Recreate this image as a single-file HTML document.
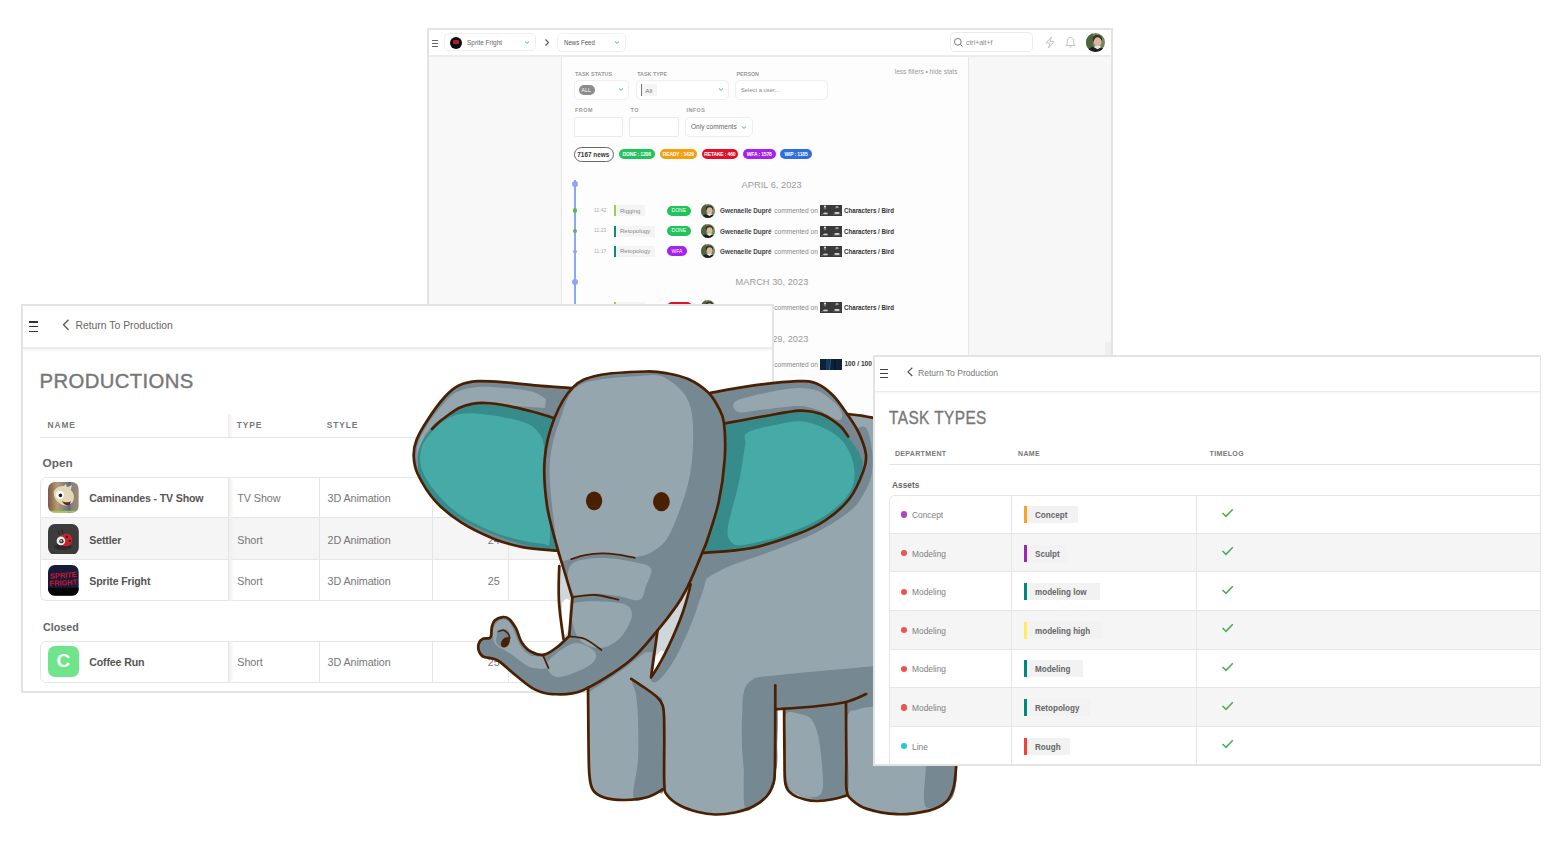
<!DOCTYPE html>
<html><head><meta charset="utf-8">
<style>
*{margin:0;padding:0;box-sizing:border-box}
html,body{width:1557px;height:850px;overflow:hidden;background:#fff;font-family:"Liberation Sans",sans-serif}
.a{position:absolute}
.t{position:absolute;white-space:nowrap;line-height:1}
#nf{left:427px;top:28px;width:686px;height:620px;border:2px solid #e3e3e3;background:#f8f8f8;overflow:hidden}
#pr{left:21px;top:304px;width:753px;height:389px;border:2px solid #e3e3e3;background:#fff;overflow:hidden}
#tt{left:873px;top:355px;width:668px;height:411px;border:2px solid #e3e3e3;border-right-width:1px;background:#fff;overflow:hidden}
</style></head><body>
<!-- NEWS FEED PANEL -->
<div id="nf" class="a"><div class="a" style="left:-429px;top:-30px;width:1557px;height:850px">
 <div class="a" style="left:429px;top:30px;width:682px;height:26px;background:#fff"></div>
 <div class="a" style="left:429px;top:55px;width:682px;height:2px;background:#ebebeb"></div>
 <div class="a" style="left:561px;top:57px;width:1px;height:400px;background:#e6e6e6"></div>
 <div class="a" style="left:562px;top:57px;width:406px;height:400px;background:#fdfdfd"></div>
 <div class="a" style="left:968px;top:57px;width:1px;height:400px;background:#e6e6e6"></div>
 <div class="a" style="left:969px;top:57px;width:142px;height:400px;background:#f7f7f7"></div>
 <div class="a" style="left:1105px;top:342px;width:6px;height:20px;background:#efefef"></div>
 <!-- header -->
 <div class="a" style="left:432px;top:40px;width:6px;height:1px;background:#666"></div>
 <div class="a" style="left:432px;top:43px;width:6px;height:1px;background:#666"></div>
 <div class="a" style="left:432px;top:46px;width:6px;height:1px;background:#666"></div>
 <div class="a" style="left:444px;top:33px;width:92px;height:18px;border:1px solid #eee;border-radius:5px"></div>
 <div class="a" style="left:450px;top:36.5px;width:12px;height:12px;border-radius:50%;background:#0a0a14;overflow:hidden"><div class="a" style="left:2.8px;top:3.6px;width:6.4px;height:3.6px;background:#b8142a;border-radius:1px"></div></div>
 <div class="t" style="left:467px;top:38.5px;font-size:7px;color:#666;transform:scaleX(0.92);transform-origin:0 0">Sprite Fright</div>
 <svg class="a" style="left:523px;top:40px" width="8" height="5"><path d="M2 1.5 L4 3.4 L6 1.5" stroke="#3cc471" stroke-width="1" fill="none"/></svg>
 <svg class="a" style="left:543px;top:38px" width="8" height="9"><path d="M2.5 1.5 L5.5 4.5 L2.5 7.5" stroke="#555" stroke-width="1.1" fill="none"/></svg>
 <div class="a" style="left:557px;top:32.7px;width:69px;height:19px;border:1px solid #eee;border-radius:5px"></div>
 <div class="t" style="left:563.6px;top:38.5px;font-size:7px;color:#555;transform:scaleX(0.87);transform-origin:0 0">News Feed</div>
 <svg class="a" style="left:613px;top:40px" width="8" height="5"><path d="M2 1.5 L4 3.4 L6 1.5" stroke="#3cc471" stroke-width="1" fill="none"/></svg>
 <div class="a" style="left:949.5px;top:32.3px;width:83px;height:20px;border:1px solid #ebebeb;border-radius:5px"></div>
 <svg class="a" style="left:953px;top:37px" width="11" height="11"><circle cx="4.8" cy="4.8" r="3.4" stroke="#777" stroke-width="1" fill="none"/><path d="M7.3 7.3 L9.5 9.5" stroke="#777" stroke-width="1"/></svg>
 <div class="t" style="left:966px;top:39.8px;font-size:6.9px;color:#888">ctrl+alt+f</div>
 <svg class="a" style="left:1044px;top:36px" width="12" height="13"><path d="M7.5 1 L2 7 L6 7 L4.5 12 L10 5.5 L6 5.5 Z" stroke="#bbb" stroke-width="0.9" fill="none" stroke-linejoin="round"/></svg>
 <svg class="a" style="left:1065px;top:36px" width="11" height="13"><path d="M5.5 1.5 C3 1.5 2.2 3.5 2.2 5.5 L2.2 8 L1 9.5 L10 9.5 L8.8 8 L8.8 5.5 C8.8 3.5 8 1.5 5.5 1.5 Z M4.5 11 L6.5 11" stroke="#bbb" stroke-width="0.9" fill="none"/></svg>
 <svg class="a" style="left:1085.5px;top:33px" width="19" height="19" viewBox="0 0 14 14"><defs><clipPath id="av"><circle cx="7" cy="7" r="7"/></clipPath></defs><g clip-path="url(#av)"><rect width="14" height="14" fill="#6d8756"/><rect x="0" y="0" width="5" height="14" fill="#4f6540"/><ellipse cx="8.3" cy="4.5" rx="3.6" ry="3" fill="#3a2e22"/><ellipse cx="8.6" cy="6.6" rx="2.9" ry="3.4" fill="#d9b8a0"/><path d="M1 14 C2 10.5 5 9.8 8 10 C11 10 13 11 14 14 Z" fill="#1f1f1f"/><path d="M5.5 10.3 L8.5 12 L11.5 10.3 L10 9.6 L7 9.6 Z" fill="#e8e8e8"/></g></svg>
 <!-- filters -->
 <div class="t" style="left:575px;top:71.6px;font-size:5.4px;font-weight:bold;color:#999;letter-spacing:0.05px">TASK STATUS</div>
 <div class="t" style="left:637.2px;top:71.6px;font-size:5.4px;font-weight:bold;color:#999;letter-spacing:0px">TASK TYPE</div>
 <div class="t" style="left:736.5px;top:72.1px;font-size:5.4px;font-weight:bold;color:#999;letter-spacing:-0.05px">PERSON</div>
 <div class="t" style="left:894.8px;top:68.7px;font-size:6.5px;color:#999">less filters • hide stats</div>
 <div class="a" style="left:574px;top:80px;width:55.2px;height:20px;border:1px solid #eee;border-radius:5px;background:#fff"></div>
 <div class="a" style="left:579px;top:85px;width:16.3px;height:10px;border-radius:5px;background:#8c8c8c"></div>
 <div class="t" style="left:581.3px;top:87.5px;font-size:5.4px;color:#fff">ALL</div>
 <svg class="a" style="left:617px;top:87px" width="8" height="5"><path d="M2 1.5 L4 3.4 L6 1.5" stroke="#3cc471" stroke-width="1" fill="none"/></svg>
 <div class="a" style="left:636.3px;top:80px;width:92.5px;height:20px;border:1px solid #eee;border-radius:5px;background:#fff"></div>
 <div class="a" style="left:640.5px;top:84.4px;width:1.4px;height:11.6px;background:#777"></div>
 <div class="a" style="left:641.9px;top:84.4px;width:15px;height:11.6px;background:#f4f4f4"></div>
 <div class="t" style="left:645.3px;top:87.6px;font-size:6.2px;color:#777">All</div>
 <svg class="a" style="left:717px;top:87px" width="8" height="5"><path d="M2 1.5 L4 3.4 L6 1.5" stroke="#3cc471" stroke-width="1" fill="none"/></svg>
 <div class="a" style="left:735.2px;top:80px;width:93px;height:20px;border:1px solid #eee;border-radius:5px;background:#fff"></div>
 <div class="t" style="left:741px;top:88px;font-size:5.8px;color:#888">Select a user...</div>
 <div class="t" style="left:575px;top:108.1px;font-size:5.4px;font-weight:bold;color:#999;letter-spacing:0.5px">FROM</div>
 <div class="t" style="left:630.5px;top:108.1px;font-size:5.4px;font-weight:bold;color:#999;letter-spacing:0.5px">TO</div>
 <div class="t" style="left:686.4px;top:108.1px;font-size:5.4px;font-weight:bold;color:#999;letter-spacing:0.5px">INFOS</div>
 <div class="a" style="left:574px;top:116.5px;width:49.4px;height:20px;border:1px solid #eaeaea;border-radius:2px;background:#fff"></div>
 <div class="a" style="left:629.2px;top:116.5px;width:49.5px;height:20px;border:1px solid #eaeaea;border-radius:2px;background:#fff"></div>
 <div class="a" style="left:685px;top:116.5px;width:67.5px;height:20px;border:1px solid #eee;border-radius:5px;background:#fff"></div>
 <div class="t" style="left:690.9px;top:123.7px;font-size:6.6px;color:#666">Only comments</div>
 <svg class="a" style="left:740px;top:124.5px" width="8" height="5"><path d="M2 1.5 L4 3.4 L6 1.5" stroke="#3cc471" stroke-width="1" fill="none"/></svg>
 <!-- stats -->
 <div class="a" style="left:573.7px;top:147px;width:40px;height:14.7px;border:1px solid #666;border-radius:7.5px;background:#fff"></div>
 <div class="t" style="left:577.3px;top:152px;font-size:6.4px;font-weight:bold;color:#333">7167 news</div>
 <div class="a" style="left:618.8px;top:149.2px;width:35.8px;height:9.7px;border-radius:5px;background:#22c35b;color:#fff;font-size:5px;font-weight:bold;line-height:10.4px;text-align:center;white-space:nowrap;letter-spacing:-0.15px">DONE : 1206</div>
 <div class="a" style="left:659.8px;top:149.2px;width:37.1px;height:9.7px;border-radius:5px;background:#f59f0f;color:#fff;font-size:5px;font-weight:bold;line-height:10.4px;text-align:center;white-space:nowrap;letter-spacing:-0.15px">READY : 1429</div>
 <div class="a" style="left:701.9px;top:149.2px;width:35.9px;height:9.7px;border-radius:5px;background:#e0102a;color:#fff;font-size:5px;font-weight:bold;line-height:10.4px;text-align:center;white-space:nowrap;letter-spacing:-0.15px">RETAKE : 460</div>
 <div class="a" style="left:742.8px;top:149.2px;width:32.9px;height:9.7px;border-radius:5px;background:#a620ee;color:#fff;font-size:5px;font-weight:bold;line-height:10.4px;text-align:center;white-space:nowrap;letter-spacing:-0.15px">WFA : 1578</div>
 <div class="a" style="left:780.4px;top:149.2px;width:31.3px;height:9.7px;border-radius:5px;background:#2f6fdc;color:#fff;font-size:5px;font-weight:bold;line-height:10.4px;text-align:center;white-space:nowrap;letter-spacing:-0.15px">WIP : 1185</div>
 <!-- timeline -->
 <div class="a" style="left:574px;top:180px;width:2px;height:200px;background:#8ea6f6"></div>
 <div class="a" style="left:572px;top:181.2px;width:6px;height:6px;border-radius:50%;background:#8ea6f6"></div>
 <div class="a" style="left:572px;top:278.7px;width:6px;height:6px;border-radius:50%;background:#8ea6f6"></div>
 <div class="t" style="left:741.6px;top:181px;font-size:9.2px;color:#999;letter-spacing:0.05px">APRIL 6, 2023</div>
 <div class="t" style="left:735.6px;top:278.3px;font-size:9.2px;color:#999;letter-spacing:0.05px">MARCH 30, 2023</div>
 <div class="t" style="left:735.6px;top:335.3px;font-size:9.2px;color:#999;letter-spacing:0.05px">MARCH 29, 2023</div>
 <div class="a" style="left:572.7px;top:208.39999999999998px;width:4.6px;height:4.6px;border-radius:50%;background:#5cb84a"></div>
 <div class="t" style="left:593.9px;top:207.89999999999998px;font-size:5.2px;color:#aaa">11:42</div>
 <div class="a" style="left:614.1px;top:205.2px;width:2px;height:11px;background:#9ccc55"></div>
 <div class="a" style="left:616.1px;top:205.2px;width:28.8px;height:11px;background:#f4f4f4"></div>
 <div class="t" style="left:620px;top:207.5px;font-size:6px;color:#888">Rigging</div>
 <div class="a" style="left:666.7px;top:205.79999999999998px;width:24.1px;height:9.8px;border-radius:5px;background:#22c35b"></div>
 <div class="t" style="left:678.75px;top:208.1px;font-size:5px;color:#fff;transform:translateX(-50%)">DONE</div>
 <svg class="a" style="left:701.4px;top:203.7px" width="14" height="14" viewBox="0 0 14 14"><defs><clipPath id="av"><circle cx="7" cy="7" r="7"/></clipPath></defs><g clip-path="url(#av)"><rect width="14" height="14" fill="#6d8756"/><rect x="0" y="0" width="5" height="14" fill="#4f6540"/><ellipse cx="8.3" cy="4.5" rx="3.6" ry="3" fill="#3a2e22"/><ellipse cx="8.6" cy="6.6" rx="2.9" ry="3.4" fill="#d9b8a0"/><path d="M1 14 C2 10.5 5 9.8 8 10 C11 10 13 11 14 14 Z" fill="#1f1f1f"/><path d="M5.5 10.3 L8.5 12 L11.5 10.3 L10 9.6 L7 9.6 Z" fill="#e8e8e8"/></g></svg>
 <div class="t" style="left:719.9px;top:208.4px;font-size:6.6px;font-weight:bold;color:#444;transform:scaleX(0.965);transform-origin:0 0">Gwenaelle Dupré</div>
 <div class="t" style="left:774.2px;top:208.4px;font-size:6.6px;color:#888">commented on</div>
 <svg class="a" style="left:820px;top:205.2px" width="22" height="11" viewBox="0 0 22 11"><rect width="22" height="11" fill="#3a3a3a"/><ellipse cx="5" cy="1.5" rx="1.2" ry="1" fill="#ddd"/><path d="M5 2.5 L5 4.5 M3.5 3 L6.5 3" stroke="#bbb" stroke-width=".5"/><ellipse cx="17" cy="2" rx="1.6" ry=".8" fill="#ccc"/><path d="M15 3 L19 2.5" stroke="#999" stroke-width=".5"/><ellipse cx="5.5" cy="8.3" rx="2.5" ry="0.9" fill="#d0d0d0"/><ellipse cx="17" cy="8" rx="2.8" ry="1.1" fill="#e0e0e0"/><path d="M1 9.5 L8 9.2 M13 9.3 L21 9" stroke="#999" stroke-width=".4"/></svg>
 <div class="t" style="left:844.4px;top:208.4px;font-size:6.6px;font-weight:bold;color:#333;transform:scaleX(0.94);transform-origin:0 0">Characters / Bird</div>
 <div class="a" style="left:572.7px;top:228.7px;width:4.6px;height:4.6px;border-radius:50%;background:#5cb84a"></div>
 <div class="t" style="left:593.9px;top:228.2px;font-size:5.2px;color:#aaa">11:23</div>
 <div class="a" style="left:614.1px;top:225.5px;width:2px;height:11px;background:#0f8a7a"></div>
 <div class="a" style="left:616.1px;top:225.5px;width:39px;height:11px;background:#f4f4f4"></div>
 <div class="t" style="left:620px;top:227.8px;font-size:6px;color:#888">Retopology</div>
 <div class="a" style="left:666.7px;top:226.1px;width:24.1px;height:9.8px;border-radius:5px;background:#22c35b"></div>
 <div class="t" style="left:678.75px;top:228.4px;font-size:5px;color:#fff;transform:translateX(-50%)">DONE</div>
 <svg class="a" style="left:701.4px;top:224.0px" width="14" height="14" viewBox="0 0 14 14"><defs><clipPath id="av"><circle cx="7" cy="7" r="7"/></clipPath></defs><g clip-path="url(#av)"><rect width="14" height="14" fill="#6d8756"/><rect x="0" y="0" width="5" height="14" fill="#4f6540"/><ellipse cx="8.3" cy="4.5" rx="3.6" ry="3" fill="#3a2e22"/><ellipse cx="8.6" cy="6.6" rx="2.9" ry="3.4" fill="#d9b8a0"/><path d="M1 14 C2 10.5 5 9.8 8 10 C11 10 13 11 14 14 Z" fill="#1f1f1f"/><path d="M5.5 10.3 L8.5 12 L11.5 10.3 L10 9.6 L7 9.6 Z" fill="#e8e8e8"/></g></svg>
 <div class="t" style="left:719.9px;top:228.7px;font-size:6.6px;font-weight:bold;color:#444;transform:scaleX(0.965);transform-origin:0 0">Gwenaelle Dupré</div>
 <div class="t" style="left:774.2px;top:228.7px;font-size:6.6px;color:#888">commented on</div>
 <svg class="a" style="left:820px;top:225.5px" width="22" height="11" viewBox="0 0 22 11"><rect width="22" height="11" fill="#3a3a3a"/><ellipse cx="5" cy="1.5" rx="1.2" ry="1" fill="#ddd"/><path d="M5 2.5 L5 4.5 M3.5 3 L6.5 3" stroke="#bbb" stroke-width=".5"/><ellipse cx="17" cy="2" rx="1.6" ry=".8" fill="#ccc"/><path d="M15 3 L19 2.5" stroke="#999" stroke-width=".5"/><ellipse cx="5.5" cy="8.3" rx="2.5" ry="0.9" fill="#d0d0d0"/><ellipse cx="17" cy="8" rx="2.8" ry="1.1" fill="#e0e0e0"/><path d="M1 9.5 L8 9.2 M13 9.3 L21 9" stroke="#999" stroke-width=".4"/></svg>
 <div class="t" style="left:844.4px;top:228.7px;font-size:6.6px;font-weight:bold;color:#333;transform:scaleX(0.94);transform-origin:0 0">Characters / Bird</div>
 <div class="a" style="left:573.2px;top:249.5px;width:3.6px;height:3.6px;border-radius:50%;background:#8ea6f6"></div>
 <div class="t" style="left:593.9px;top:248.5px;font-size:5.2px;color:#aaa">11:17</div>
 <div class="a" style="left:614.1px;top:245.8px;width:2px;height:11px;background:#0f8a7a"></div>
 <div class="a" style="left:616.1px;top:245.8px;width:39px;height:11px;background:#f4f4f4"></div>
 <div class="t" style="left:620px;top:248.10000000000002px;font-size:6px;color:#888">Retopology</div>
 <div class="a" style="left:666.7px;top:246.4px;width:20.3px;height:9.8px;border-radius:5px;background:#a620ee"></div>
 <div class="t" style="left:676.85px;top:248.70000000000002px;font-size:5px;color:#fff;transform:translateX(-50%)">WFA</div>
 <svg class="a" style="left:701.4px;top:244.3px" width="14" height="14" viewBox="0 0 14 14"><defs><clipPath id="av"><circle cx="7" cy="7" r="7"/></clipPath></defs><g clip-path="url(#av)"><rect width="14" height="14" fill="#6d8756"/><rect x="0" y="0" width="5" height="14" fill="#4f6540"/><ellipse cx="8.3" cy="4.5" rx="3.6" ry="3" fill="#3a2e22"/><ellipse cx="8.6" cy="6.6" rx="2.9" ry="3.4" fill="#d9b8a0"/><path d="M1 14 C2 10.5 5 9.8 8 10 C11 10 13 11 14 14 Z" fill="#1f1f1f"/><path d="M5.5 10.3 L8.5 12 L11.5 10.3 L10 9.6 L7 9.6 Z" fill="#e8e8e8"/></g></svg>
 <div class="t" style="left:719.9px;top:249.0px;font-size:6.6px;font-weight:bold;color:#444;transform:scaleX(0.965);transform-origin:0 0">Gwenaelle Dupré</div>
 <div class="t" style="left:774.2px;top:249.0px;font-size:6.6px;color:#888">commented on</div>
 <svg class="a" style="left:820px;top:245.8px" width="22" height="11" viewBox="0 0 22 11"><rect width="22" height="11" fill="#3a3a3a"/><ellipse cx="5" cy="1.5" rx="1.2" ry="1" fill="#ddd"/><path d="M5 2.5 L5 4.5 M3.5 3 L6.5 3" stroke="#bbb" stroke-width=".5"/><ellipse cx="17" cy="2" rx="1.6" ry=".8" fill="#ccc"/><path d="M15 3 L19 2.5" stroke="#999" stroke-width=".5"/><ellipse cx="5.5" cy="8.3" rx="2.5" ry="0.9" fill="#d0d0d0"/><ellipse cx="17" cy="8" rx="2.8" ry="1.1" fill="#e0e0e0"/><path d="M1 9.5 L8 9.2 M13 9.3 L21 9" stroke="#999" stroke-width=".4"/></svg>
 <div class="t" style="left:844.4px;top:249.0px;font-size:6.6px;font-weight:bold;color:#333;transform:scaleX(0.94);transform-origin:0 0">Characters / Bird</div>
 <div class="a" style="left:572.7px;top:304.9px;width:4.6px;height:4.6px;border-radius:50%;background:#5cb84a"></div>
 <div class="t" style="left:593.9px;top:304.4px;font-size:5.2px;color:#aaa">10:05</div>
 <div class="a" style="left:614.1px;top:301.7px;width:2px;height:11px;background:#9ccc55"></div>
 <div class="a" style="left:616.1px;top:301.7px;width:28.8px;height:11px;background:#f4f4f4"></div>
 <div class="t" style="left:620px;top:304.8px;font-size:6px;color:#888">Rigging</div>
 <div class="a" style="left:666.7px;top:302.3px;width:25px;height:9.8px;border-radius:5px;background:#e0102a"></div>
 <div class="t" style="left:679.2px;top:305.4px;font-size:5px;color:#fff;transform:translateX(-50%)">RETAKE</div>
 <svg class="a" style="left:701.4px;top:300.2px" width="14" height="14" viewBox="0 0 14 14"><defs><clipPath id="av"><circle cx="7" cy="7" r="7"/></clipPath></defs><g clip-path="url(#av)"><rect width="14" height="14" fill="#6d8756"/><rect x="0" y="0" width="5" height="14" fill="#4f6540"/><ellipse cx="8.3" cy="4.5" rx="3.6" ry="3" fill="#3a2e22"/><ellipse cx="8.6" cy="6.6" rx="2.9" ry="3.4" fill="#d9b8a0"/><path d="M1 14 C2 10.5 5 9.8 8 10 C11 10 13 11 14 14 Z" fill="#1f1f1f"/><path d="M5.5 10.3 L8.5 12 L11.5 10.3 L10 9.6 L7 9.6 Z" fill="#e8e8e8"/></g></svg>
 <div class="t" style="left:719.9px;top:304.9px;font-size:6.6px;font-weight:bold;color:#444;transform:scaleX(0.965);transform-origin:0 0">Gwenaelle Dupré</div>
 <div class="t" style="left:774.2px;top:304.9px;font-size:6.6px;color:#888">commented on</div>
 <svg class="a" style="left:820px;top:301.7px" width="22" height="11" viewBox="0 0 22 11"><rect width="22" height="11" fill="#3a3a3a"/><ellipse cx="5" cy="1.5" rx="1.2" ry="1" fill="#ddd"/><path d="M5 2.5 L5 4.5 M3.5 3 L6.5 3" stroke="#bbb" stroke-width=".5"/><ellipse cx="17" cy="2" rx="1.6" ry=".8" fill="#ccc"/><path d="M15 3 L19 2.5" stroke="#999" stroke-width=".5"/><ellipse cx="5.5" cy="8.3" rx="2.5" ry="0.9" fill="#d0d0d0"/><ellipse cx="17" cy="8" rx="2.8" ry="1.1" fill="#e0e0e0"/><path d="M1 9.5 L8 9.2 M13 9.3 L21 9" stroke="#999" stroke-width=".4"/></svg>
 <div class="t" style="left:844.4px;top:304.9px;font-size:6.6px;font-weight:bold;color:#333;transform:scaleX(0.94);transform-origin:0 0">Characters / Bird</div>
 <div class="a" style="left:572.7px;top:362.0px;width:4.6px;height:4.6px;border-radius:50%;background:#5cb84a"></div>
 <div class="t" style="left:593.9px;top:361.5px;font-size:5.2px;color:#aaa">09:12</div>
 <div class="a" style="left:614.1px;top:358.8px;width:2px;height:11px;background:#e57373"></div>
 <div class="a" style="left:616.1px;top:358.8px;width:30px;height:11px;background:#f4f4f4"></div>
 <div class="t" style="left:620px;top:361.1px;font-size:6px;color:#888">Layout</div>
 <div class="a" style="left:666.7px;top:359.40000000000003px;width:24.1px;height:9.8px;border-radius:5px;background:#22c35b"></div>
 <div class="t" style="left:678.75px;top:361.7px;font-size:5px;color:#fff;transform:translateX(-50%)">DONE</div>
 <svg class="a" style="left:701.4px;top:357.3px" width="14" height="14" viewBox="0 0 14 14"><defs><clipPath id="av"><circle cx="7" cy="7" r="7"/></clipPath></defs><g clip-path="url(#av)"><rect width="14" height="14" fill="#6d8756"/><rect x="0" y="0" width="5" height="14" fill="#4f6540"/><ellipse cx="8.3" cy="4.5" rx="3.6" ry="3" fill="#3a2e22"/><ellipse cx="8.6" cy="6.6" rx="2.9" ry="3.4" fill="#d9b8a0"/><path d="M1 14 C2 10.5 5 9.8 8 10 C11 10 13 11 14 14 Z" fill="#1f1f1f"/><path d="M5.5 10.3 L8.5 12 L11.5 10.3 L10 9.6 L7 9.6 Z" fill="#e8e8e8"/></g></svg>
 <div class="t" style="left:719.9px;top:362.0px;font-size:6.6px;font-weight:bold;color:#444;transform:scaleX(0.965);transform-origin:0 0">Gwenaelle Dupré</div>
 <div class="t" style="left:774.2px;top:362.0px;font-size:6.6px;color:#888">commented on</div>
 <svg class="a" style="left:820px;top:358.8px" width="22" height="11" viewBox="0 0 22 11"><rect width="22" height="11" fill="#0d2238"/><rect x="6" width="3" height="11" fill="#143a5e"/><path d="M10.5 0 L9.5 11" stroke="#3a78b0" stroke-width=".7"/><rect x="14" width="2" height="11" fill="#0a1a2a"/></svg>
 <div class="t" style="left:844.4px;top:360.90000000000003px;font-size:6.6px;font-weight:bold;color:#333">100 / 100</div>
</div></div>

<!-- PRODUCTIONS PANEL -->
<div id="pr" class="a"><div class="a" style="left:-23px;top:-306px;width:1557px;height:850px">
 <div class="a" style="left:23px;top:347px;width:750px;height:2px;background:#ebebeb"></div>
 <div class="a" style="left:23px;top:349px;width:750px;height:3px;background:linear-gradient(#f6f6f6,#fff)"></div>
 <div class="a" style="left:28.5px;top:321.3px;width:9.6px;height:1.6px;background:#333"></div>
 <div class="a" style="left:28.5px;top:325.8px;width:9.6px;height:1.6px;background:#333"></div>
 <div class="a" style="left:28.5px;top:330.5px;width:9.6px;height:1.6px;background:#333"></div>
 <svg class="a" style="left:60px;top:318px" width="12" height="14"><path d="M8.5 1.8 L3.5 6.8 L8.5 11.8" stroke="#555" stroke-width="1.3" fill="none"/></svg>
 <div class="t" style="left:75.4px;top:321.2px;font-size:10.4px;color:#666">Return To Production</div>
 <div class="t" style="left:39.6px;top:371px;font-size:20.3px;color:#777;letter-spacing:0.38px;-webkit-text-stroke:0.4px #777">PRODUCTIONS</div>
 <div class="t" style="left:47.6px;top:421px;font-size:8.4px;font-weight:bold;color:#777;letter-spacing:0.9px">NAME</div>
 <div class="t" style="left:236.7px;top:421px;font-size:8.4px;font-weight:bold;color:#777;letter-spacing:0.9px">TYPE</div>
 <div class="t" style="left:326.8px;top:421px;font-size:8.4px;font-weight:bold;color:#777;letter-spacing:0.9px">STYLE</div>
 <div class="t" style="left:441px;top:421px;font-size:8.4px;font-weight:bold;color:#777;letter-spacing:0.9px">EPISODES</div>
 <div class="a" style="left:227.5px;top:414px;width:5px;height:23px;background:linear-gradient(90deg,#ededed,#fff)"></div>
 <div class="a" style="left:39.6px;top:437px;width:730px;height:1px;background:#e3e3e3"></div>
 <div class="t" style="left:42.6px;top:457.5px;font-size:11.8px;font-weight:bold;color:#666">Open</div>
 <div class="t" style="left:42.6px;top:622px;font-size:11.8px;font-weight:bold;color:#666;transform:scaleX(0.91);transform-origin:0 0">Closed</div>
 <div class="a" style="left:39.6px;top:476.6px;width:740px;height:41.60000000000002px;background:#fff;border:1px solid #e6e6e6;border-top-width:1px;border-radius:6px 6px 0 0"></div>
 <svg class="a" style="left:47.9px;top:482.00000000000006px" width="30.8" height="30.8" viewBox="0 0 31 31"><defs><clipPath id="c1"><rect width="31" height="31" rx="7"/></clipPath><linearGradient id="g1" x1="0" y1="0" x2="1" y2="0"><stop offset="0" stop-color="#7a5a44"/><stop offset=".3" stop-color="#b89a78"/><stop offset=".6" stop-color="#6f7c8c"/><stop offset="1" stop-color="#a08a70"/></linearGradient></defs><g clip-path="url(#c1)"><rect width="31" height="31" fill="url(#g1)"/><rect x="20" y="0" width="3" height="31" fill="#56667a" opacity=".7"/><path d="M6 9 C9 4 15 3 20 5 L24 3 L23 8 C27 12 27 18 24 21 C20 25 14 24 11 21 C7 18 5 13 6 9 Z" fill="#e6d7b4"/><path d="M14 6 L18 2 L19 6 Z" fill="#e6d7b4"/><circle cx="12" cy="13" r="4.2" fill="#fff"/><circle cx="12.5" cy="13.5" r="1.8" fill="#222"/><path d="M14 19 C17 21 21 21 23 19 L22 23 C19 24 16 23 14 19 Z" fill="#5a2a1a"/><rect x="0" y="29" width="31" height="2" fill="#9acd4a"/></g></svg>
 <div class="t" style="left:89.3px;top:492.90px;font-size:10.6px;font-weight:bold;color:#555;letter-spacing:-0.15px">Caminandes - TV Show</div>
 <div class="a" style="left:227.9px;top:476.6px;width:1px;height:41.60000000000002px;background:#e6e6e6"></div><div class="a" style="left:229.3px;top:476.6px;width:5px;height:41.60000000000002px;background:linear-gradient(90deg,#efefef,rgba(255,255,255,0))"></div>
 <div class="t" style="left:237.3px;top:492.90px;font-size:10.8px;color:#777;letter-spacing:-0.1px">TV Show</div>
 <div class="a" style="left:318.8px;top:476.6px;width:1px;height:41.60000000000002px;background:#e6e6e6"></div>
 <div class="t" style="left:327.6px;top:492.90px;font-size:10.8px;color:#777;letter-spacing:-0.1px">3D Animation</div>
 <div class="a" style="left:432.1px;top:476.6px;width:1px;height:41.60000000000002px;background:#e6e6e6"></div>
 <div class="t" style="right:1057.4px;top:492.90px;font-size:10.8px;color:#777;letter-spacing:-0.1px">24</div>
 <div class="a" style="left:507.9px;top:476.6px;width:1px;height:41.60000000000002px;background:#e6e6e6"></div>
 <div class="a" style="left:39.6px;top:518.2px;width:740px;height:41.69999999999993px;background:#f5f5f5;border:1px solid #e6e6e6;border-top-width:0px;border-radius:0"></div>
 <svg class="a" style="left:47.9px;top:523.65px" width="30.8" height="30.8" viewBox="0 0 31 31"><rect width="31" height="31" rx="7" fill="#3c3c3c"/><ellipse cx="15" cy="23" rx="9" ry="3" fill="#2a2a2a"/><path d="M10 7 L12 11 M14 6 L15 10" stroke="#222" stroke-width="1"/><circle cx="18" cy="16" r="6.5" fill="#c8232c"/><circle cx="19" cy="13" r="1.2" fill="#222"/><circle cx="22" cy="17" r="1.1" fill="#222"/><circle cx="13" cy="17" r="4.3" fill="#eee"/><circle cx="13.5" cy="17.3" r="2.2" fill="#333"/><circle cx="13.2" cy="17" r="0.9" fill="#ddd"/></svg>
 <div class="t" style="left:89.3px;top:534.55px;font-size:10.6px;font-weight:bold;color:#555;letter-spacing:-0.15px">Settler</div>
 <div class="a" style="left:227.9px;top:518.2px;width:1px;height:41.69999999999993px;background:#e6e6e6"></div><div class="a" style="left:229.3px;top:518.2px;width:5px;height:41.69999999999993px;background:linear-gradient(90deg,#efefef,rgba(255,255,255,0))"></div>
 <div class="t" style="left:237.3px;top:534.55px;font-size:10.8px;color:#777;letter-spacing:-0.1px">Short</div>
 <div class="a" style="left:318.8px;top:518.2px;width:1px;height:41.69999999999993px;background:#e6e6e6"></div>
 <div class="t" style="left:327.6px;top:534.55px;font-size:10.8px;color:#777;letter-spacing:-0.1px">2D Animation</div>
 <div class="a" style="left:432.1px;top:518.2px;width:1px;height:41.69999999999993px;background:#e6e6e6"></div>
 <div class="t" style="right:1057.4px;top:534.55px;font-size:10.8px;color:#777;letter-spacing:-0.1px">24</div>
 <div class="a" style="left:507.9px;top:518.2px;width:1px;height:41.69999999999993px;background:#e6e6e6"></div>
 <div class="a" style="left:39.6px;top:559.9px;width:740px;height:41.60000000000002px;background:#fff;border:1px solid #e6e6e6;border-top-width:0px;border-radius:0 0 6px 6px"></div>
 <svg class="a" style="left:47.9px;top:565.3000000000001px" width="30.8" height="30.8" viewBox="0 0 31 31"><defs><clipPath id="c3"><rect width="31" height="31" rx="7"/></clipPath></defs><g clip-path="url(#c3)"><rect width="31" height="31" fill="#141c38"/><rect y="23" width="31" height="8" fill="#050505"/><text x="15.5" y="13" text-anchor="middle" font-family="Liberation Sans" font-weight="bold" font-size="7.5" fill="#d0142a" transform="rotate(-4 15.5 13)">SPRITE</text><text x="15.5" y="20.5" text-anchor="middle" font-family="Liberation Sans" font-weight="bold" font-size="7.5" fill="#d0142a" transform="rotate(-3 15.5 20)">FRIGHT</text></g></svg>
 <div class="t" style="left:89.3px;top:576.20px;font-size:10.6px;font-weight:bold;color:#555;letter-spacing:-0.15px">Sprite Fright</div>
 <div class="a" style="left:227.9px;top:559.9px;width:1px;height:41.60000000000002px;background:#e6e6e6"></div><div class="a" style="left:229.3px;top:559.9px;width:5px;height:41.60000000000002px;background:linear-gradient(90deg,#efefef,rgba(255,255,255,0))"></div>
 <div class="t" style="left:237.3px;top:576.20px;font-size:10.8px;color:#777;letter-spacing:-0.1px">Short</div>
 <div class="a" style="left:318.8px;top:559.9px;width:1px;height:41.60000000000002px;background:#e6e6e6"></div>
 <div class="t" style="left:327.6px;top:576.20px;font-size:10.8px;color:#777;letter-spacing:-0.1px">3D Animation</div>
 <div class="a" style="left:432.1px;top:559.9px;width:1px;height:41.60000000000002px;background:#e6e6e6"></div>
 <div class="t" style="right:1057.4px;top:576.20px;font-size:10.8px;color:#777;letter-spacing:-0.1px">25</div>
 <div class="a" style="left:507.9px;top:559.9px;width:1px;height:41.60000000000002px;background:#e6e6e6"></div>
 <div class="a" style="left:39.6px;top:641.0px;width:740px;height:41.60000000000002px;background:#fff;border:1px solid #e6e6e6;border-top-width:1px;border-radius:6px"></div>
 <div class="a" style="left:47.9px;top:646.4px;width:30.8px;height:30.8px;border-radius:7px;background:#6ee58a;color:#fff;font-size:19px;font-weight:bold;line-height:30.8px;text-align:center">C</div>
 <div class="t" style="left:89.3px;top:657.30px;font-size:10.6px;font-weight:bold;color:#555;letter-spacing:-0.15px">Coffee Run</div>
 <div class="a" style="left:227.9px;top:641.0px;width:1px;height:41.60000000000002px;background:#e6e6e6"></div><div class="a" style="left:229.3px;top:641.0px;width:5px;height:41.60000000000002px;background:linear-gradient(90deg,#efefef,rgba(255,255,255,0))"></div>
 <div class="t" style="left:237.3px;top:657.30px;font-size:10.8px;color:#777;letter-spacing:-0.1px">Short</div>
 <div class="a" style="left:318.8px;top:641.0px;width:1px;height:41.60000000000002px;background:#e6e6e6"></div>
 <div class="t" style="left:327.6px;top:657.30px;font-size:10.8px;color:#777;letter-spacing:-0.1px">3D Animation</div>
 <div class="a" style="left:432.1px;top:641.0px;width:1px;height:41.60000000000002px;background:#e6e6e6"></div>
 <div class="t" style="right:1057.4px;top:657.30px;font-size:10.8px;color:#777;letter-spacing:-0.1px">25</div>
 <div class="a" style="left:507.9px;top:641.0px;width:1px;height:41.60000000000002px;background:#e6e6e6"></div>
 <div class="a" style="left:23px;top:691px;width:750px;height:2px;background:#e3e3e3"></div>
</div></div>

<!-- ELEPHANT -->
<svg class="a" style="left:0;top:0" width="1557" height="850" viewBox="0 0 1557 850">
<path d="M700.0 450.0 C718.3 426.3 735.2 424.0 760.0 418.0 C784.8 412.0 830.2 414.0 849.0 414.0 C867.8 414.0 861.2 413.7 873.0 418.0 C884.8 422.3 906.3 426.3 920.0 440.0 C933.7 453.7 948.7 473.3 955.0 500.0 C961.3 526.7 957.7 555.7 958.0 600.0 C958.3 644.3 957.6 735.6 957.0 766.0 C956.4 796.4 955.7 776.7 954.5 782.4 C953.3 788.1 954.2 795.3 950.0 800.0 C945.8 804.7 937.8 808.2 929.0 810.6 C920.2 813.0 907.3 814.5 897.0 814.2 C886.7 813.9 875.1 811.9 867.0 808.9 C858.9 805.9 852.0 798.7 848.5 796.5 C845.0 794.3 851.1 794.9 846.0 795.6 C840.9 796.4 826.5 801.4 817.7 801.0 C808.9 800.6 798.5 795.8 793.0 793.0 C787.5 790.2 786.4 792.8 785.0 784.0 C783.6 775.2 784.6 752.3 784.5 740.0 C784.4 727.7 785.5 715.2 784.1 710.0 C782.7 704.8 777.4 699.3 776.0 709.0 C774.6 718.7 776.4 755.7 776.0 768.0 C775.6 780.3 775.0 778.3 773.5 783.0 C772.0 787.7 770.2 792.2 767.0 796.0 C763.8 799.8 759.3 803.2 754.0 806.0 C748.7 808.8 741.5 811.1 735.0 812.5 C728.5 813.9 721.2 814.6 715.0 814.5 C708.8 814.4 703.8 813.5 698.0 812.0 C692.2 810.5 685.2 808.3 680.0 805.5 C674.8 802.7 669.9 797.7 667.0 795.0 C664.1 792.3 666.1 789.0 662.9 789.3 C659.7 789.6 654.4 795.2 648.0 797.0 C641.6 798.8 632.1 799.9 624.8 800.0 C617.5 800.1 609.3 799.2 604.0 797.5 C598.7 795.8 595.4 793.8 593.0 790.0 C590.6 786.2 590.1 783.3 589.4 775.0 C588.6 766.7 588.7 754.6 588.5 740.0 C588.3 725.4 586.1 704.3 588.0 687.6 C589.9 670.9 589.7 661.3 600.0 640.0 C610.3 618.7 633.3 591.7 650.0 560.0 C666.7 528.3 681.7 473.7 700.0 450.0 Z" fill="#95a6ae"/>
<path d="M746.0 700.0 C747.7 693.3 746.3 684.2 752.0 680.0 C757.7 675.8 761.2 677.2 780.0 675.0 C798.8 672.8 845.0 668.7 865.0 667.0 C885.0 665.3 889.2 659.5 900.0 665.0 C910.8 670.5 921.7 684.2 930.0 700.0 C938.3 715.8 945.8 746.3 950.0 760.0 C954.2 773.7 959.2 780.3 955.0 782.0 C950.8 783.7 934.2 777.0 925.0 770.0 C915.8 763.0 909.2 748.3 900.0 740.0 C890.8 731.7 878.7 724.2 870.0 720.0 C861.3 715.8 851.7 703.3 848.0 715.0 C844.3 726.7 851.0 782.5 848.0 790.0 C845.0 797.5 835.0 771.7 830.0 760.0 C825.0 748.3 824.7 728.0 818.0 720.0 C811.3 712.0 797.0 713.3 790.0 712.0 C783.0 710.7 778.3 702.3 776.0 712.0 C773.7 721.7 780.3 757.0 776.0 770.0 C771.7 783.0 755.5 791.7 750.0 790.0 C744.5 788.3 744.3 771.7 743.0 760.0 C741.7 748.3 741.5 730.0 742.0 720.0 C742.5 710.0 744.3 706.7 746.0 700.0 Z" fill="#768891"/>
<path d="M784 711 L846 703 L847 796 L830 801 L815 799 L800 795 L786 786 Z" fill="#768891"/>
<path d="M786.0 714.0 C788.3 709.7 795.8 713.2 800.0 714.0 C804.2 714.8 808.0 715.5 811.0 719.0 C814.0 722.5 816.2 727.3 818.0 735.0 C819.8 742.7 821.3 755.5 822.0 765.0 C822.7 774.5 824.0 786.7 822.0 792.0 C820.0 797.3 814.5 797.0 810.0 797.0 C805.5 797.0 798.8 794.8 795.0 792.0 C791.2 789.2 788.5 788.7 787.0 780.0 C785.5 771.3 786.2 751.0 786.0 740.0 C785.8 729.0 783.7 718.3 786.0 714.0 Z" fill="#95a6ae"/>
<path d="M852.0 712.0 C860.3 706.2 887.8 705.3 900.0 705.0 C912.2 704.7 920.3 700.8 925.0 710.0 C929.7 719.2 928.0 745.0 928.0 760.0 C928.0 775.0 929.7 792.3 925.0 800.0 C920.3 807.7 909.2 806.0 900.0 806.0 C890.8 806.0 878.0 803.5 870.0 800.0 C862.0 796.5 855.3 795.0 852.0 785.0 C848.7 775.0 850.0 752.2 850.0 740.0 C850.0 727.8 843.7 717.8 852.0 712.0 Z" fill="#95a6ae"/>
<path d="M925.0 700.0 C930.7 690.0 954.7 689.0 960.0 700.0 C965.3 711.0 957.8 751.0 957.0 766.0 C956.2 781.0 956.5 784.0 955.0 790.0 C953.5 796.0 952.2 799.0 948.0 802.0 C943.8 805.0 934.0 808.3 930.0 808.0 C926.0 807.7 924.7 808.0 924.0 800.0 C923.3 792.0 925.8 776.7 926.0 760.0 C926.2 743.3 919.3 710.0 925.0 700.0 Z" fill="#768891"/>
<path d="M632.0 680.0 C633.5 678.8 640.8 685.2 645.0 688.0 C649.2 690.8 654.0 694.0 657.0 697.0 C660.0 700.0 661.8 691.3 663.0 706.0 C664.2 720.7 665.2 770.5 664.0 785.0 C662.8 799.5 661.0 790.7 656.0 793.0 C651.0 795.3 637.0 804.5 634.0 799.0 C631.0 793.5 637.3 773.2 638.0 760.0 C638.7 746.8 638.3 730.8 638.0 720.0 C637.7 709.2 637.0 701.7 636.0 695.0 C635.0 688.3 630.5 681.2 632.0 680.0 Z" fill="#768891"/>
<path d="M745.0 688.0 C750.2 675.7 769.8 672.3 775.0 686.0 C780.2 699.7 776.8 752.3 776.0 770.0 C775.2 787.7 773.2 786.3 770.0 792.0 C766.8 797.7 761.2 801.3 757.0 804.0 C752.8 806.7 747.2 815.3 745.0 808.0 C742.8 800.7 744.0 780.0 744.0 760.0 C744.0 740.0 739.8 700.3 745.0 688.0 Z" fill="#768891"/>
<path d="M712 548 C710 562 708 570 706.6 577.6 C703 592 700 600 699 602 C694 618 688 632 682 645 C676 658 668 672 658 681 C654 684 650 682 650 676 L652 652 L645 652.5 C638 658 632 662 628.9 665 C620 672 610 678 600 685 L589 692 L586 689 L620 667 L657.6 630.4 L690 585 L703 551 Z" fill="#768891"/>
<path d="M700.0 546.0 C708.4 545.3 734.3 545.0 750.6 542.0 C766.9 539.0 785.7 532.5 797.6 528.0 C809.5 523.5 814.1 520.7 822.0 515.0 C829.9 509.3 839.0 501.5 845.0 494.0 C851.0 486.5 855.5 476.7 858.0 470.0 C860.5 463.3 860.5 460.3 860.0 454.0 C859.5 447.7 854.0 436.3 855.0 432.0 C856.0 427.7 863.2 425.0 866.0 428.0 C868.8 431.0 871.1 442.2 872.0 450.0 C872.9 457.8 873.0 467.5 871.5 475.0 C870.0 482.5 866.6 489.0 863.0 495.0 C859.4 501.0 857.7 504.8 850.0 511.0 C842.3 517.2 829.5 525.5 817.0 532.0 C804.5 538.5 788.8 544.5 774.7 550.0 C760.6 555.5 742.9 560.8 732.4 565.0 C721.9 569.2 715.4 573.3 712.0 575.0 L704.0 580.0 L696.0 560.0 Z" fill="#768891"/>
<path d="M710.6 392.9 C717.3 391.7 736.1 387.8 750.6 385.9 C765.1 383.9 786.6 381.6 797.6 381.2 C808.6 380.8 810.6 381.1 816.5 383.5 C822.4 385.9 827.8 390.2 832.9 395.3 C838.0 400.4 842.8 407.8 847.1 414.1 C851.4 420.4 855.7 426.2 858.8 432.9 C861.9 439.6 865.1 447.8 865.9 454.1 C866.7 460.4 866.2 463.2 863.5 470.6 C860.8 478.1 855.7 490.6 849.4 498.8 C843.1 507.0 834.5 514.1 825.9 520.0 C817.3 525.9 810.1 529.4 797.6 534.1 C785.1 538.8 766.3 545.1 750.6 548.2 C734.9 551.3 711.4 552.1 703.5 552.9 L700.0 540.0 L712.0 470.0 L712.0 400.0 Z" fill="#768891"/>
<path d="M736.0 401.0 C741.3 397.7 759.7 394.2 770.0 392.0 C780.3 389.8 789.6 388.2 797.6 388.0 C805.6 387.8 811.8 388.5 818.0 391.0 C824.2 393.5 831.0 399.2 835.0 403.0 C839.0 406.8 841.5 411.2 842.0 414.0 C842.5 416.8 842.0 420.7 838.0 420.0 C834.0 419.3 824.7 412.3 818.0 410.0 C811.3 407.7 807.3 406.0 797.6 406.0 C787.9 406.0 769.9 409.0 760.0 410.0 C750.1 411.0 742.0 413.5 738.0 412.0 C734.0 410.5 730.7 404.3 736.0 401.0 Z" fill="#95a6ae"/>
<path d="M724.7 423.5 C731.0 422.3 749.9 418.6 762.4 416.5 C774.9 414.4 790.2 411.0 800.0 410.6 C809.8 410.2 814.5 411.6 821.2 414.1 C827.9 416.7 835.5 422.2 840.0 425.9 C844.5 429.6 844.9 431.6 848.2 436.5 C851.5 441.4 857.7 449.4 860.0 455.0 C862.3 460.6 863.8 462.7 862.0 470.0 C860.2 477.3 855.4 490.5 849.4 498.8 C843.4 507.1 834.5 514.1 825.9 520.0 C817.3 525.9 810.1 529.4 797.6 534.1 C785.1 538.8 766.3 545.1 750.6 548.2 C734.9 551.3 711.4 552.1 703.5 552.9 L700.0 540.0 L712.0 470.0 L715.0 424.0 Z" fill="#378c8b"/>
<path d="M747.2 432.7 C752.2 429.3 765.1 426.8 775.0 425.0 C784.9 423.2 796.0 420.0 806.5 422.0 C817.0 424.0 830.5 430.3 838.3 437.0 C846.1 443.7 851.0 453.6 853.1 462.4 C855.2 471.2 855.6 481.2 851.0 490.0 C846.4 498.8 836.6 507.9 825.6 515.3 C814.6 522.7 799.1 529.4 785.3 534.4 C771.5 539.4 752.2 544.0 743.0 545.0 C733.8 546.0 732.7 543.9 730.2 540.7 C727.7 537.5 726.7 535.4 728.1 525.9 C729.5 516.4 735.9 497.0 738.7 483.6 C741.5 470.2 743.6 453.9 745.0 445.4 C746.4 436.9 742.2 436.1 747.2 432.7 Z" fill="#46aaa7"/>
<path d="M710.6 392.9 C717.3 391.7 736.1 387.8 750.6 385.9 C765.1 383.9 786.6 381.6 797.6 381.2 C808.6 380.8 810.6 381.1 816.5 383.5 C822.4 385.9 827.8 390.2 832.9 395.3 C838.0 400.4 842.8 407.8 847.1 414.1 C851.4 420.4 855.7 426.2 858.8 432.9 C861.9 439.6 865.1 447.8 865.9 454.1 C866.7 460.4 866.2 463.2 863.5 470.6 C860.8 478.1 855.7 490.6 849.4 498.8 C843.1 507.0 834.5 514.1 825.9 520.0 C817.3 525.9 810.1 529.4 797.6 534.1 C785.1 538.8 766.3 545.1 750.6 548.2 C734.9 551.3 711.4 552.1 703.5 552.9" fill="none" stroke="#4a1f02" stroke-width="2.7" stroke-linecap="round" stroke-linejoin="round"/>
<path d="M724.7 423.5 C731.0 422.3 749.9 418.6 762.4 416.5 C774.9 414.4 790.2 411.0 800.0 410.6 C809.8 410.2 814.5 411.6 821.2 414.1 C827.9 416.7 835.5 422.2 840.0 425.9 C844.5 429.6 846.8 434.7 848.2 436.5" fill="none" stroke="#4a1f02" stroke-width="2.7" stroke-linecap="round" stroke-linejoin="round"/>
<path d="M847.0 414.0 C849.2 414.2 855.3 414.8 860.0 415.5 C864.7 416.2 872.5 417.6 875.0 418.0" fill="none" stroke="#4a1f02" stroke-width="2.7" stroke-linecap="round" stroke-linejoin="round"/>
<path d="M573.0 388.2 C567.7 387.8 552.4 386.9 541.2 385.9 C530.0 384.9 516.5 383.2 505.9 382.4 C495.3 381.6 485.5 380.7 477.7 381.2 C469.9 381.7 464.4 382.9 458.9 385.5 C453.4 388.1 449.8 391.4 444.7 397.0 C439.6 402.6 432.9 411.8 428.2 419.0 C423.5 426.2 418.9 433.8 416.5 440.0 C414.1 446.2 413.5 450.3 413.7 456.0 C413.9 461.7 414.1 466.5 417.7 474.0 C421.3 481.5 428.1 493.1 435.3 501.2 C442.6 509.3 451.4 516.1 461.2 522.4 C471.0 528.7 484.0 534.8 494.2 538.9 C504.4 543.0 512.0 545.1 522.4 547.1 C532.8 549.1 550.8 550.1 556.5 550.7 L562.0 545.0 L560.0 470.0 L575.0 400.0 Z" fill="#768891"/>
<path d="M546.0 399.0 C543.6 397.8 538.6 393.3 531.8 391.5 C525.0 389.7 514.1 388.8 505.0 388.0 C495.9 387.2 484.8 386.4 477.0 387.0 C469.2 387.6 463.2 389.2 458.0 391.5 C452.8 393.8 450.7 396.1 446.0 401.0 C441.3 405.9 434.5 414.3 430.0 421.0 C425.5 427.7 421.2 435.2 419.0 441.0 C416.8 446.8 416.5 450.8 416.5 456.0 C416.5 461.2 417.2 467.0 419.0 472.0 C420.8 477.0 425.7 483.7 427.0 486.0 L418.0 466.0 L419.0 450.0 L425.0 435.0 L434.0 424.0 L452.0 412.0 L470.0 406.0 L500.0 405.0 L530.0 407.0 L545.0 408.0 Z" fill="#95a6ae"/>
<path d="M553.0 417.7 C545.1 415.7 518.6 408.3 505.9 405.9 C493.2 403.5 484.4 403.0 477.0 403.3 C469.6 403.6 466.1 405.5 461.5 407.6 C456.9 409.7 454.9 412.0 449.7 415.9 C444.4 419.8 434.9 426.0 430.0 431.0 C425.1 436.0 422.1 440.8 420.0 446.0 C417.9 451.2 417.0 455.7 417.5 462.0 C418.0 468.3 417.6 475.5 423.0 484.0 C428.4 492.5 438.8 504.8 450.0 513.0 C461.2 521.2 477.5 527.7 490.0 533.0 C502.5 538.3 513.9 542.0 525.0 545.0 C536.1 548.0 551.2 549.8 556.5 550.7 L562.0 545.0 L560.0 470.0 L560.0 420.0 Z" fill="#378c8b"/>
<path d="M449.7 417.5 C457.4 414.1 464.3 412.9 476.0 413.5 C487.7 414.1 509.7 417.9 520.0 421.0 C530.3 424.1 533.8 426.5 538.0 432.0 C542.2 437.5 543.0 436.7 545.0 454.0 C547.0 471.3 550.7 521.1 550.0 536.0 C549.3 550.9 549.3 543.8 541.0 543.5 C532.7 543.2 513.3 539.2 500.0 534.5 C486.7 529.8 471.7 522.5 461.0 515.5 C450.3 508.5 442.5 500.1 436.0 492.5 C429.5 484.9 424.5 477.1 422.0 470.0 C419.5 462.9 419.7 456.0 421.0 450.0 C422.3 444.0 425.2 439.4 430.0 434.0 C434.8 428.6 442.0 420.9 449.7 417.5 Z" fill="#46aaa7"/>
<path d="M573.0 388.2 C567.7 387.8 552.4 386.9 541.2 385.9 C530.0 384.9 516.5 383.2 505.9 382.4 C495.3 381.6 485.5 380.7 477.7 381.2 C469.9 381.7 464.4 382.9 458.9 385.5 C453.4 388.1 449.8 391.4 444.7 397.0 C439.6 402.6 432.9 411.8 428.2 419.0 C423.5 426.2 418.9 433.8 416.5 440.0 C414.1 446.2 413.5 450.3 413.7 456.0 C413.9 461.7 414.1 466.5 417.7 474.0 C421.3 481.5 428.1 493.1 435.3 501.2 C442.6 509.3 451.4 516.1 461.2 522.4 C471.0 528.7 484.0 534.8 494.2 538.9 C504.4 543.0 512.0 545.1 522.4 547.1 C532.8 549.1 550.8 550.1 556.5 550.7" fill="none" stroke="#4a1f02" stroke-width="2.7" stroke-linecap="round" stroke-linejoin="round"/>
<path d="M553.0 417.7 C549.2 416.6 537.9 413.0 530.0 411.0 C522.1 409.0 513.2 406.8 505.9 405.5 C498.6 404.2 491.6 403.3 486.0 403.0 C480.4 402.7 476.5 403.0 472.0 403.8 C467.5 404.6 463.2 406.0 459.0 408.0 C454.8 410.0 450.5 413.5 447.0 416.0 C443.5 418.5 440.5 420.8 438.0 423.0 C435.5 425.2 433.0 428.0 432.0 429.0" fill="none" stroke="#4a1f02" stroke-width="2.7" stroke-linecap="round" stroke-linejoin="round"/>
<path d="M558.8 553.2 C556.8 545.4 549.5 521.9 547.1 506.2 C544.8 490.5 543.5 473.6 544.7 459.1 C545.9 444.6 549.4 431.1 554.1 419.1 C558.8 407.2 565.5 394.7 572.9 387.4 C580.3 380.1 586.6 377.8 598.8 375.2 C611.0 372.6 634.4 371.8 645.9 371.5 C657.4 371.2 661.0 372.2 668.0 373.5 C675.0 374.8 681.5 376.0 688.2 379.1 C694.9 382.2 703.0 387.6 708.0 392.3 C713.0 397.0 715.7 402.2 718.4 407.4 C721.1 412.6 723.0 414.8 724.0 423.4 C725.0 432.0 725.6 446.1 724.7 459.1 C723.8 472.1 721.7 488.0 718.8 501.5 C715.9 515.0 710.0 531.7 707.3 540.0 C704.6 548.3 705.1 545.6 702.8 551.3 C700.5 556.9 696.2 567.4 693.4 573.9 C690.6 580.4 688.8 584.7 686.0 590.0 C683.2 595.3 681.2 599.2 676.5 605.9 C671.8 612.6 665.5 621.1 657.6 630.4 C649.7 639.7 641.4 651.5 628.9 661.5 C616.4 671.5 595.1 685.1 582.4 690.5 C569.6 695.9 560.3 694.3 552.4 694.1 C544.5 693.9 540.6 692.3 534.7 689.4 C528.8 686.5 522.8 681.0 517.1 676.5 C511.4 672.0 504.5 665.4 500.6 662.4 C496.7 659.4 496.4 659.8 493.5 658.8 C490.6 657.8 485.3 657.9 482.9 656.5 C480.4 655.1 479.5 652.8 478.8 650.6 C478.1 648.4 478.1 645.5 478.8 643.5 C479.5 641.5 481.1 639.7 482.9 638.8 C484.7 637.9 488.0 638.8 489.4 638.2 C490.8 637.6 490.8 637.1 491.2 635.3 C491.6 633.4 491.2 629.5 491.8 627.1 C492.4 624.7 492.9 622.3 494.7 620.6 C496.5 618.9 500.0 617.4 502.4 617.1 C504.8 616.8 506.6 616.9 508.8 618.8 C511.1 620.6 513.7 624.3 515.9 628.2 C518.1 632.1 519.2 638.5 521.8 642.4 C524.3 646.3 527.5 649.8 531.2 651.8 C534.9 653.8 539.8 655.5 544.1 654.7 C548.4 653.9 552.9 650.2 557.1 647.1 C561.3 644.0 567.2 637.9 569.2 636.0 L572.4 597.9 L558.8 553.2 Z" fill="#768891"/>
<path d="M560.0 420.0 C565.0 407.5 566.7 392.3 580.0 385.0 C593.3 377.7 625.5 377.0 640.0 376.0 C654.5 375.0 658.6 373.8 667.0 379.0 C675.4 384.2 686.7 392.1 690.6 407.4 C694.5 422.7 693.7 450.5 690.6 470.9 C687.5 491.3 677.7 516.5 671.8 529.7 C665.9 542.9 661.3 545.5 655.0 550.0 C648.7 554.5 643.0 556.5 634.0 557.0 C625.0 557.5 611.5 552.7 601.0 553.0 C590.5 553.3 577.8 558.5 571.0 559.0 C564.2 559.5 563.2 565.0 560.0 556.0 C556.8 547.0 553.7 521.0 552.0 505.0 C550.3 489.0 548.7 474.2 550.0 460.0 C551.3 445.8 555.0 432.5 560.0 420.0 Z" fill="#95a6ae"/>
<path d="M573.0 563.0 C578.5 559.3 590.8 558.2 601.0 558.0 C611.2 557.8 625.7 560.2 634.0 562.0 C642.3 563.8 649.0 564.5 651.0 568.5 C653.0 572.5 647.9 580.8 646.0 586.0 C644.1 591.2 644.1 598.3 639.4 600.0 C634.7 601.7 625.6 597.1 618.0 596.0 C610.4 594.9 601.3 593.7 594.0 593.5 C586.7 593.3 578.3 597.2 574.0 595.0 C569.7 592.8 568.2 585.3 568.0 580.0 C567.8 574.7 567.5 566.7 573.0 563.0 Z" fill="#95a6ae"/>
<path d="M574.0 603.0 C582.0 600.2 610.3 601.0 620.0 603.0 C629.7 605.0 632.0 609.2 632.0 615.0 C632.0 620.8 625.3 632.5 620.0 638.0 C614.7 643.5 606.7 647.7 600.0 648.0 C593.3 648.3 584.7 644.7 580.0 640.0 C575.3 635.3 573.0 626.2 572.0 620.0 C571.0 613.8 566.0 605.8 574.0 603.0 Z" fill="#95a6ae"/>
<path d="M551.0 658.0 C555.5 653.5 567.7 644.0 575.0 643.0 C582.3 642.0 592.5 648.3 595.0 652.0 C597.5 655.7 595.8 660.8 590.0 665.0 C584.2 669.2 567.0 676.2 560.0 677.0 C553.0 677.8 549.5 673.2 548.0 670.0 C546.5 666.8 546.5 662.5 551.0 658.0 Z" fill="#95a6ae"/>
<path d="M494.0 627.0 C495.2 624.3 497.7 621.0 500.0 620.0 C502.3 619.0 505.7 619.2 508.0 621.0 C510.3 622.8 512.0 627.0 514.0 631.0 C516.0 635.0 517.3 641.0 520.0 645.0 C522.7 649.0 525.8 652.8 530.0 655.0 C534.2 657.2 542.0 655.8 545.0 658.0 C548.0 660.2 550.5 666.5 548.0 668.0 C545.5 669.5 535.5 668.8 530.0 667.0 C524.5 665.2 519.0 659.7 515.0 657.0 C511.0 654.3 509.2 653.0 506.0 651.0 C502.8 649.0 498.2 647.5 496.0 645.0 C493.8 642.5 493.3 639.0 493.0 636.0 C492.7 633.0 492.8 629.7 494.0 627.0 Z" fill="#95a6ae"/>
<path d="M497 633 C499 628 506 627 509 632 C511 636 511 643 508 646 C504 649 497 647 496 641 Z" fill="#768891"/>
<path d="M559.4 563 L558.8 592 L560.6 618 L563.5 639 L569.2 636 L572.4 597.9 Z" fill="#cfd7dc"/>
<path d="M562 603 L566 598.5 L569.8 600 L568.5 630 L565 636 L562.3 628 Z" fill="#fff"/>
<path d="M691 583 L683 597 L676.5 605.9 L667 618 L657.6 630.4 L651 677.4 C660 665 672 640 680 620 C685 605 688 595 691 583 Z" fill="#cfd7dc"/>
<path d="M652.5 674 L655.5 656 L661 650.5 L666 652.5 C663 661 659 668 652.5 674 Z" fill="#fff"/>
<path d="M558.8 553.2 C556.8 545.4 549.5 521.9 547.1 506.2 C544.8 490.5 543.5 473.6 544.7 459.1 C545.9 444.6 549.4 431.1 554.1 419.1 C558.8 407.2 565.5 394.7 572.9 387.4 C580.3 380.1 586.6 377.8 598.8 375.2 C611.0 372.6 634.4 371.8 645.9 371.5 C657.4 371.2 661.0 372.2 668.0 373.5 C675.0 374.8 681.5 376.0 688.2 379.1 C694.9 382.2 703.0 387.6 708.0 392.3 C713.0 397.0 715.7 402.2 718.4 407.4 C721.1 412.6 723.0 414.8 724.0 423.4 C725.0 432.0 725.6 446.1 724.7 459.1 C723.8 472.1 721.7 488.0 718.8 501.5 C715.9 515.0 710.0 531.7 707.3 540.0 C704.6 548.3 705.1 545.6 702.8 551.3 C700.5 556.9 696.2 567.4 693.4 573.9 C690.6 580.4 688.8 584.7 686.0 590.0 C683.2 595.3 681.2 599.2 676.5 605.9 C671.8 612.6 665.5 621.1 657.6 630.4 C649.7 639.7 641.4 651.5 628.9 661.5 C616.4 671.5 595.1 685.1 582.4 690.5 C569.6 695.9 560.3 694.3 552.4 694.1 C544.5 693.9 540.6 692.3 534.7 689.4 C528.8 686.5 522.8 681.0 517.1 676.5 C511.4 672.0 504.5 665.4 500.6 662.4 C496.7 659.4 496.4 659.8 493.5 658.8 C490.6 657.8 485.3 657.9 482.9 656.5 C480.4 655.1 479.5 652.8 478.8 650.6 C478.1 648.4 478.1 645.5 478.8 643.5 C479.5 641.5 481.1 639.7 482.9 638.8 C484.7 637.9 488.0 638.8 489.4 638.2 C490.8 637.6 490.8 637.1 491.2 635.3 C491.6 633.4 491.2 629.5 491.8 627.1 C492.4 624.7 492.9 622.3 494.7 620.6 C496.5 618.9 500.0 617.4 502.4 617.1 C504.8 616.8 506.6 616.9 508.8 618.8 C511.1 620.6 513.7 624.3 515.9 628.2 C518.1 632.1 519.2 638.5 521.8 642.4 C524.3 646.3 527.5 649.8 531.2 651.8 C534.9 653.8 539.8 655.5 544.1 654.7 C548.4 653.9 552.9 650.2 557.1 647.1 C561.3 644.0 567.2 637.9 569.2 636.0" fill="none" stroke="#4a1f02" stroke-width="2.7" stroke-linecap="round" stroke-linejoin="round"/>
<path d="M569.2 636 L572.4 597.9 L558.8 553.2" fill="none" stroke="#4a1f02" stroke-width="2.7" stroke-linejoin="round" stroke-linecap="round"/>
<path d="M559.3 566.0 C559.2 568.3 558.9 574.3 558.8 580.0 C558.7 585.7 558.6 593.7 558.9 600.0 C559.2 606.3 559.8 611.5 560.6 618.0 C561.4 624.5 563.0 635.5 563.5 639.0" fill="none" stroke="#4a1f02" stroke-width="2.7" stroke-linecap="round" stroke-linejoin="round"/>
<path d="M690.6 584.2 C688 596 685 607 680 620 C672 640 662 662 651 677.4 L657.6 630.4" fill="none" stroke="#4a1f02" stroke-width="2.7" stroke-linejoin="round" stroke-linecap="round"/>
<path d="M571.2 559.1 C573.5 558.5 579.9 556.2 585.0 555.2 C590.1 554.2 596.3 553.5 601.8 553.4 C607.3 553.3 612.5 553.9 618.0 554.6 C623.5 555.4 631.9 557.4 634.7 557.9" fill="none" stroke="#4a1f02" stroke-width="1.8" stroke-linecap="round" stroke-linejoin="round"/>
<path d="M571.8 597.2 C575.7 596.8 587.2 594.6 595.0 595.0 C602.8 595.4 614.5 598.9 618.4 599.7" fill="none" stroke="#4a1f02" stroke-width="1.8" stroke-linecap="round" stroke-linejoin="round"/>
<path d="M568.6 636.4 C571.3 636.8 579.5 636.7 585.0 639.0 C590.5 641.3 598.7 648.2 601.4 650.1" fill="none" stroke="#4a1f02" stroke-width="1.8" stroke-linecap="round" stroke-linejoin="round"/>
<path d="M542.8 654.8 C543.8 657.0 547.5 665.8 548.5 668.0" fill="none" stroke="#4a1f02" stroke-width="1.8" stroke-linecap="round" stroke-linejoin="round"/>
<path d="M501 643 C502 638 506 636.5 509.5 637.5 C510.5 641 509 646.5 504.5 647.5 C502 647.8 500.5 645.5 501 643 Z" fill="#4a1f02"/>
<path d="M498.3 631.5 C499.2 631.3 501.9 629.9 503.5 630.2 C505.1 630.5 506.9 632.2 508.0 633.5 C509.1 634.8 509.5 637.2 509.8 638.0" fill="none" stroke="#4a1f02" stroke-width="1.5" stroke-linecap="round" stroke-linejoin="round"/>
<ellipse cx="594.1" cy="500.8" rx="8.2" ry="9.4" fill="#4a2100"/>
<ellipse cx="661.4" cy="501.7" rx="8.4" ry="9.6" fill="#4a2100"/>
<path d="M588.0 687.6 C588.1 696.3 588.3 725.4 588.5 740.0 C588.7 754.6 588.6 766.7 589.4 775.0 C590.1 783.3 590.6 786.2 593.0 790.0 C595.4 793.8 598.7 795.8 604.0 797.5 C609.3 799.2 617.5 800.1 624.8 800.0 C632.1 799.9 641.6 798.8 648.0 797.0 C654.4 795.2 660.4 790.6 662.9 789.3" fill="none" stroke="#4a1f02" stroke-width="2.7" stroke-linecap="round" stroke-linejoin="round"/>
<path d="M631.2 678.8 C633.5 680.3 640.7 685.0 645.0 688.0 C649.3 691.0 654.1 694.2 657.0 697.0 C659.9 699.8 661.3 701.8 662.5 705.0 C663.7 708.2 663.7 710.2 664.0 716.0 C664.3 721.8 664.2 728.7 664.3 740.0 C664.3 751.3 663.8 774.5 664.3 783.7 C664.8 792.9 664.4 791.4 667.0 795.0 C669.6 798.6 674.8 802.7 680.0 805.5 C685.2 808.3 692.2 810.5 698.0 812.0 C703.8 813.5 708.8 814.4 715.0 814.5 C721.2 814.6 728.5 813.9 735.0 812.5 C741.5 811.1 748.7 808.8 754.0 806.0 C759.3 803.2 763.8 799.8 767.0 796.0 C770.2 792.2 772.2 788.2 773.5 783.0 C774.8 777.8 774.7 781.3 775.0 765.0 C775.3 748.7 775.2 698.6 775.3 685.3" fill="none" stroke="#4a1f02" stroke-width="2.7" stroke-linecap="round" stroke-linejoin="round"/>
<path d="M775.3 709.1 C781.8 708.7 802.2 707.7 814.0 706.5 C825.8 705.3 837.3 704.1 846.0 702.0 C854.7 699.9 862.8 695.4 866.2 694.1" fill="none" stroke="#4a1f02" stroke-width="2.7" stroke-linecap="round" stroke-linejoin="round"/>
<path d="M784.1 710.0 C784.2 718.3 784.3 747.6 784.5 760.0 C784.7 772.4 784.2 778.4 785.5 784.1 C786.8 789.8 788.8 791.4 792.0 794.0 C795.2 796.6 800.7 798.3 805.0 799.5 C809.3 800.7 812.9 801.1 817.7 801.0 C822.5 800.9 829.3 799.9 834.0 799.0 C838.7 798.1 844.0 796.2 846.0 795.6" fill="none" stroke="#4a1f02" stroke-width="2.7" stroke-linecap="round" stroke-linejoin="round"/>
<path d="M846.0 703.0 C846.0 712.5 846.2 745.5 846.3 760.0 C846.4 774.5 845.6 783.3 846.6 790.0 C847.6 796.7 848.6 796.9 852.0 800.0 C855.4 803.1 859.5 806.5 867.0 808.9 C874.5 811.3 886.7 813.9 897.0 814.2 C907.3 814.5 920.7 812.6 928.9 810.6 C937.1 808.6 941.9 805.8 946.0 802.0 C950.1 798.2 951.8 793.9 953.5 788.0 C955.2 782.1 955.8 770.1 956.2 766.5" fill="none" stroke="#4a1f02" stroke-width="2.7" stroke-linecap="round" stroke-linejoin="round"/>
</svg>
<!-- TASK TYPES PANEL -->
<div id="tt" class="a"><div class="a" style="left:-875px;top:-357px;width:1557px;height:850px">
 <div class="a" style="left:875px;top:390.5px;width:665px;height:1.6px;background:#ebebeb"></div>
 <div class="a" style="left:875px;top:392px;width:665px;height:3px;background:linear-gradient(#f6f6f6,#fff)"></div>
 <div class="a" style="left:879.8px;top:369px;width:8.3px;height:1.3px;background:#444"></div>
 <div class="a" style="left:879.8px;top:373.2px;width:8.3px;height:1.3px;background:#444"></div>
 <div class="a" style="left:879.8px;top:377px;width:8.3px;height:1.3px;background:#444"></div>
 <svg class="a" style="left:905px;top:366px" width="10" height="12"><path d="M7.3 1.8 L3 5.9 L7.3 10" stroke="#555" stroke-width="1.2" fill="none"/></svg>
 <div class="t" style="left:917.7px;top:368px;font-size:9.6px;color:#777;transform:scaleX(0.89);transform-origin:0 0">Return To Production</div>
 <div class="t" style="left:889.1px;top:409px;font-size:18px;color:#777;letter-spacing:0.5px;-webkit-text-stroke:0.35px #777;transform:scaleX(0.855);transform-origin:0 0">TASK TYPES</div>
 <div class="t" style="left:894.9px;top:450px;font-size:7px;font-weight:bold;color:#777;letter-spacing:0.35px">DEPARTMENT</div>
 <div class="t" style="left:1018px;top:450px;font-size:7px;font-weight:bold;color:#777;letter-spacing:0.35px">NAME</div>
 <div class="t" style="left:1209.6px;top:450px;font-size:7px;font-weight:bold;color:#777;letter-spacing:0.35px">TIMELOG</div>
 <div class="a" style="left:889px;top:463.5px;width:660px;height:1px;background:#e3e3e3"></div>
 <div class="t" style="left:891.6px;top:480px;font-size:9.6px;font-weight:bold;color:#666;transform:scaleX(0.87);transform-origin:0 0">Assets</div>
 <div class="a" style="left:889px;top:495.2px;width:660px;height:38.6px;background:#fff;border:1px solid #e6e6e6;border-top-width:1px;border-radius:6px 6px 0 0;"></div>
 <div class="a" style="left:900.5px;top:511.3px;width:6.4px;height:6.4px;border-radius:50%;background:#ab47bc"></div>
 <div class="t" style="left:912px;top:511.0px;font-size:9px;color:#808080;transform:scaleX(0.93);transform-origin:0 0">Concept</div>
 <div class="a" style="left:1011.3px;top:495.2px;width:1px;height:38.6px;background:#e6e6e6"></div>
 <div class="a" style="left:1024.4px;top:505.9px;width:2.2px;height:17.2px;background:#f5a623"></div>
 <div class="a" style="left:1027px;top:505.9px;width:50.8px;height:17.2px;background:#f2f2f2"></div>
 <div class="t" style="left:1035.4px;top:510.9px;font-size:9.2px;font-weight:bold;color:#666;transform:scaleX(0.88);transform-origin:0 0">Concept</div>
 <div class="a" style="left:1195.7px;top:495.2px;width:1px;height:38.6px;background:#e6e6e6"></div>
 <svg class="a" style="left:1220.5px;top:507.5px" width="13" height="10"><path d="M1.5 5 L5 8.3 L11.8 1.3" stroke="#4caf50" stroke-width="1.6" fill="none"/></svg>
 <div class="a" style="left:889px;top:533.8px;width:660px;height:38.6px;background:#f5f5f5;border:1px solid #e6e6e6;border-top-width:0px;"></div>
 <div class="a" style="left:900.5px;top:549.9px;width:6.4px;height:6.4px;border-radius:50%;background:#ef5350"></div>
 <div class="t" style="left:912px;top:549.6px;font-size:9px;color:#808080;transform:scaleX(0.93);transform-origin:0 0">Modeling</div>
 <div class="a" style="left:1011.3px;top:533.8px;width:1px;height:38.6px;background:#e6e6e6"></div>
 <div class="a" style="left:1024.4px;top:544.5px;width:2.2px;height:17.2px;background:#9c27b0"></div>
 <div class="a" style="left:1027px;top:544.5px;width:39.8px;height:17.2px;background:#f2f2f2"></div>
 <div class="t" style="left:1035.4px;top:549.5px;font-size:9.2px;font-weight:bold;color:#666;transform:scaleX(0.88);transform-origin:0 0">Sculpt</div>
 <div class="a" style="left:1195.7px;top:533.8px;width:1px;height:38.6px;background:#e6e6e6"></div>
 <svg class="a" style="left:1220.5px;top:546.1px" width="13" height="10"><path d="M1.5 5 L5 8.3 L11.8 1.3" stroke="#4caf50" stroke-width="1.6" fill="none"/></svg>
 <div class="a" style="left:889px;top:572.4px;width:660px;height:38.6px;background:#fff;border:1px solid #e6e6e6;border-top-width:0px;"></div>
 <div class="a" style="left:900.5px;top:588.5px;width:6.4px;height:6.4px;border-radius:50%;background:#ef5350"></div>
 <div class="t" style="left:912px;top:588.2px;font-size:9px;color:#808080;transform:scaleX(0.93);transform-origin:0 0">Modeling</div>
 <div class="a" style="left:1011.3px;top:572.4px;width:1px;height:38.6px;background:#e6e6e6"></div>
 <div class="a" style="left:1024.4px;top:583.1px;width:2.2px;height:17.2px;background:#00897b"></div>
 <div class="a" style="left:1027px;top:583.1px;width:72.8px;height:17.2px;background:#f2f2f2"></div>
 <div class="t" style="left:1035.4px;top:588.1px;font-size:9.2px;font-weight:bold;color:#666;transform:scaleX(0.88);transform-origin:0 0">modeling low</div>
 <div class="a" style="left:1195.7px;top:572.4px;width:1px;height:38.6px;background:#e6e6e6"></div>
 <svg class="a" style="left:1220.5px;top:584.7px" width="13" height="10"><path d="M1.5 5 L5 8.3 L11.8 1.3" stroke="#4caf50" stroke-width="1.6" fill="none"/></svg>
 <div class="a" style="left:889px;top:611.0px;width:660px;height:38.6px;background:#f5f5f5;border:1px solid #e6e6e6;border-top-width:0px;"></div>
 <div class="a" style="left:900.5px;top:627.1px;width:6.4px;height:6.4px;border-radius:50%;background:#ef5350"></div>
 <div class="t" style="left:912px;top:626.8px;font-size:9px;color:#808080;transform:scaleX(0.93);transform-origin:0 0">Modeling</div>
 <div class="a" style="left:1011.3px;top:611.0px;width:1px;height:38.6px;background:#e6e6e6"></div>
 <div class="a" style="left:1024.4px;top:621.7px;width:2.2px;height:17.2px;background:#ffeb5b"></div>
 <div class="a" style="left:1027px;top:621.7px;width:75px;height:17.2px;background:#f2f2f2"></div>
 <div class="t" style="left:1035.4px;top:626.7px;font-size:9.2px;font-weight:bold;color:#666;transform:scaleX(0.88);transform-origin:0 0">modeling high</div>
 <div class="a" style="left:1195.7px;top:611.0px;width:1px;height:38.6px;background:#e6e6e6"></div>
 <svg class="a" style="left:1220.5px;top:623.3px" width="13" height="10"><path d="M1.5 5 L5 8.3 L11.8 1.3" stroke="#4caf50" stroke-width="1.6" fill="none"/></svg>
 <div class="a" style="left:889px;top:649.6px;width:660px;height:38.6px;background:#fff;border:1px solid #e6e6e6;border-top-width:0px;"></div>
 <div class="a" style="left:900.5px;top:665.7px;width:6.4px;height:6.4px;border-radius:50%;background:#ef5350"></div>
 <div class="t" style="left:912px;top:665.4px;font-size:9px;color:#808080;transform:scaleX(0.93);transform-origin:0 0">Modeling</div>
 <div class="a" style="left:1011.3px;top:649.6px;width:1px;height:38.6px;background:#e6e6e6"></div>
 <div class="a" style="left:1024.4px;top:660.3px;width:2.2px;height:17.2px;background:#00897b"></div>
 <div class="a" style="left:1027px;top:660.3px;width:56px;height:17.2px;background:#f2f2f2"></div>
 <div class="t" style="left:1035.4px;top:665.3px;font-size:9.2px;font-weight:bold;color:#666;transform:scaleX(0.88);transform-origin:0 0">Modeling</div>
 <div class="a" style="left:1195.7px;top:649.6px;width:1px;height:38.6px;background:#e6e6e6"></div>
 <svg class="a" style="left:1220.5px;top:661.9px" width="13" height="10"><path d="M1.5 5 L5 8.3 L11.8 1.3" stroke="#4caf50" stroke-width="1.6" fill="none"/></svg>
 <div class="a" style="left:889px;top:688.2px;width:660px;height:38.6px;background:#f5f5f5;border:1px solid #e6e6e6;border-top-width:0px;"></div>
 <div class="a" style="left:900.5px;top:704.3px;width:6.4px;height:6.4px;border-radius:50%;background:#ef5350"></div>
 <div class="t" style="left:912px;top:704.0px;font-size:9px;color:#808080;transform:scaleX(0.93);transform-origin:0 0">Modeling</div>
 <div class="a" style="left:1011.3px;top:688.2px;width:1px;height:38.6px;background:#e6e6e6"></div>
 <div class="a" style="left:1024.4px;top:698.9px;width:2.2px;height:17.2px;background:#00897b"></div>
 <div class="a" style="left:1027px;top:698.9px;width:62.6px;height:17.2px;background:#f2f2f2"></div>
 <div class="t" style="left:1035.4px;top:703.9px;font-size:9.2px;font-weight:bold;color:#666;transform:scaleX(0.88);transform-origin:0 0">Retopology</div>
 <div class="a" style="left:1195.7px;top:688.2px;width:1px;height:38.6px;background:#e6e6e6"></div>
 <svg class="a" style="left:1220.5px;top:700.5px" width="13" height="10"><path d="M1.5 5 L5 8.3 L11.8 1.3" stroke="#4caf50" stroke-width="1.6" fill="none"/></svg>
 <div class="a" style="left:889px;top:726.8px;width:660px;height:38.6px;background:#fff;border:1px solid #e6e6e6;border-top-width:0px;"></div>
 <div class="a" style="left:900.5px;top:742.9px;width:6.4px;height:6.4px;border-radius:50%;background:#26c6da"></div>
 <div class="t" style="left:912px;top:742.6px;font-size:9px;color:#808080;transform:scaleX(0.93);transform-origin:0 0">Line</div>
 <div class="a" style="left:1011.3px;top:726.8px;width:1px;height:38.6px;background:#e6e6e6"></div>
 <div class="a" style="left:1024.4px;top:737.5px;width:2.2px;height:17.2px;background:#f44336"></div>
 <div class="a" style="left:1027px;top:737.5px;width:43px;height:17.2px;background:#f2f2f2"></div>
 <div class="t" style="left:1035.4px;top:742.5px;font-size:9.2px;font-weight:bold;color:#666;transform:scaleX(0.88);transform-origin:0 0">Rough</div>
 <div class="a" style="left:1195.7px;top:726.8px;width:1px;height:38.6px;background:#e6e6e6"></div>
 <svg class="a" style="left:1220.5px;top:739.1px" width="13" height="10"><path d="M1.5 5 L5 8.3 L11.8 1.3" stroke="#4caf50" stroke-width="1.6" fill="none"/></svg>
</div></div>
</body></html>
